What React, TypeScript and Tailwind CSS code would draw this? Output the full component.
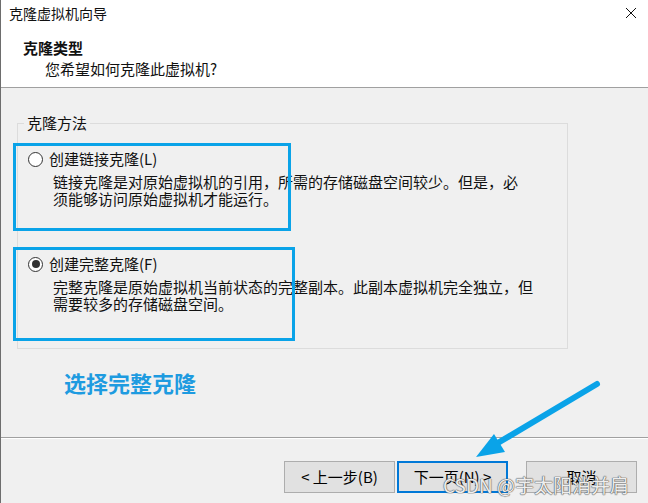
import React from 'react'

const font = { fontFamily: '"Noto Sans CJK SC", "Noto Sans", sans-serif' }

function Radio({ checked }: { checked: boolean }) {
  return (
    <span className="flex h-[15px] w-[15px] shrink-0 items-center justify-center rounded-full border border-[#333] bg-white">
      {checked && <span className="h-[8px] w-[8px] rounded-full bg-[#333]" />}
    </span>
  )
}

function Option({
  checked,
  label,
  hotkey,
  lines,
}: {
  checked: boolean
  label: string
  hotkey: string
  lines: string[]
}) {
  return (
    <div className="flex flex-col">
      <div className="flex h-[16px] items-center gap-[6px] pl-[10px]">
        <Radio checked={checked} />
        <span className="leading-[16px]">
          {label}
          <span>({hotkey})</span>
        </span>
      </div>
      <div className="mt-[6px] pl-[35px] leading-[17px]">
        {lines.map((l) => (
          <div key={l} className="whitespace-nowrap">
            {l}
          </div>
        ))}
      </div>
    </div>
  )
}

function Btn({ children, primary }: { children: React.ReactNode; primary?: boolean }) {
  return (
    <button
      className={
        'flex h-[32px] w-[111px] items-center justify-center bg-[#e1e1e1] text-[15px] text-black ' +
        (primary ? 'border-2 border-[#0078d7]' : 'border border-[#adadad]')
      }
    >
      {children}
    </button>
  )
}

export default function App() {
  return (
    <div
      className="relative flex h-[503px] w-[648px] flex-col overflow-hidden border-l border-[#6d6d6d] bg-[#f0f0f0] text-[15px] text-[#111]"
      style={font}
    >
      {/* header */}
      <div className="flex h-[88px] flex-col border-b border-[#a0a0a0] bg-white">
        <div className="flex h-[25px] items-center justify-between pl-[8px] pr-[10px]">
          <span className="text-[14px] leading-none">克隆虚拟机向导</span>
          <svg width="12" height="12" viewBox="0 0 12 12" className="mr-[1px]">
            <path d="M1 1 L11 11 M11 1 L1 11" stroke="#111" strokeWidth="1" fill="none" />
          </svg>
        </div>
        <div className="mt-[14px] pl-[22px] font-bold leading-[18px]">克隆类型</div>
        <div className="mt-[3px] pl-[44px] leading-[18px]">您希望如何克隆此虚拟机?</div>
      </div>

      {/* body */}
      <div className="flex flex-1 flex-col pl-[16px]">
        <div className="relative mt-[35px] h-[226px] w-[551px] border border-[#dcdcdc]">
          <div className="absolute left-[6px] top-[-10px] bg-[#f0f0f0] px-[3px] leading-[18px]">
            克隆方法
          </div>
          <div className="flex flex-col pt-[27px]">
            <Option
              checked={false}
              label="创建链接克隆"
              hotkey="L"
              lines={['链接克隆是对原始虚拟机的引用，所需的存储磁盘空间较少。但是，必', '须能够访问原始虚拟机才能运行。']}
            />
            <div className="h-[49px]" />
            <Option
              checked={true}
              label="创建完整克隆"
              hotkey="F"
              lines={['完整克隆是原始虚拟机当前状态的完整副本。此副本虚拟机完全独立，但', '需要较多的存储磁盘空间。']}
            />
          </div>
        </div>
        <div className="mt-[20px] pl-[47px] text-[22px] font-bold leading-[26px] text-[#1e9be0]">
          选择完整克隆
        </div>
      </div>

      {/* footer */}
      <div className="flex h-[66px] flex-col border-t border-[#a0a0a0]">
        <div className="h-px bg-white" />
        <div className="mt-[22px] flex justify-end pr-[11px]">
          <Btn>&lt; 上一步(B)</Btn>
          <div className="w-[2px]" />
          <Btn primary>下一页(N) &gt;</Btn>
          <div className="w-[18px]" />
          <Btn>取消</Btn>
        </div>
      </div>

      {/* annotation boxes */}
      <div className="pointer-events-none absolute left-[12px] top-[143px] h-[88px] w-[278px] border-[3px] border-[#0aa3e8]" />
      <div className="pointer-events-none absolute left-[12px] top-[247px] h-[94px] w-[282px] border-[3px] border-[#0aa3e8]" />

      {/* arrow */}
      <svg className="pointer-events-none absolute left-0 top-0" width="648" height="503">
        <line x1="596" y1="384" x2="490" y2="447" stroke="#0aa3e8" strokeWidth="6" strokeLinecap="round" />
        <polygon points="475,457 493,434 504,452" fill="#0aa3e8" />
      </svg>

      {/* watermark */}
      <div
        className="pointer-events-none absolute left-[442px] top-[474px] whitespace-nowrap text-[19px] leading-[22px] text-white/90"
        style={{ textShadow: '0 0 1px #555, 0 0 1px #555, 0 0 1px #555' }}
      >
        CSDN @宇太阳消并肩
      </div>
    </div>
  )
}
